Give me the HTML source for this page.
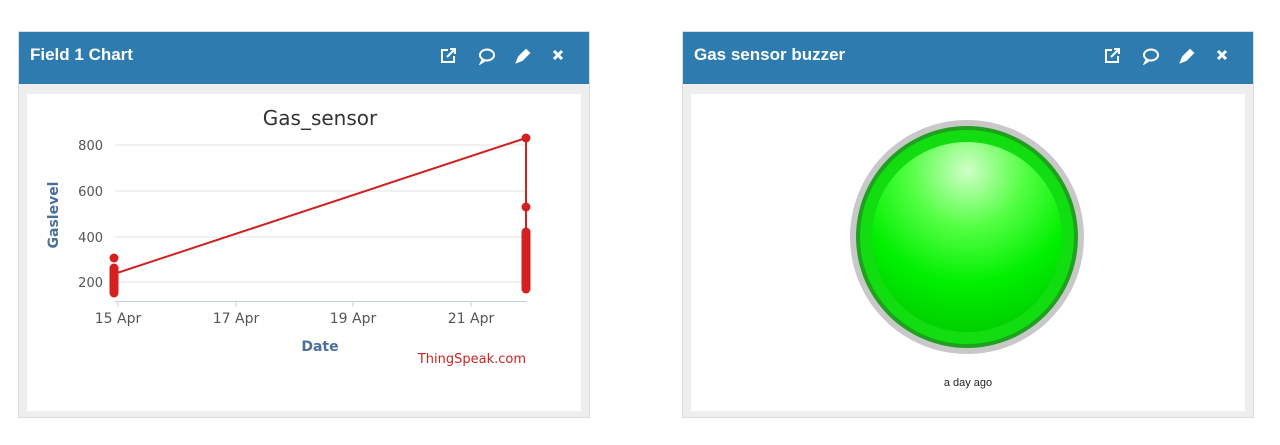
<!DOCTYPE html>
<html><head><style>
body{margin:0;width:1280px;height:445px;background:#fff;font-family:"Liberation Sans",sans-serif;position:relative;overflow:hidden}
.p{position:absolute;top:31px;width:572px;height:387px;background:#eee;border:1px solid #ddd;box-sizing:border-box}
.h{height:52px;background:#2e7bb0;color:#fff;font-weight:bold;font-size:17px;line-height:46px;padding-left:11px;position:relative}
.ic{position:absolute;top:15px}
.b{position:absolute;left:8px;top:62px;width:554px;height:317px;background:#fff}
</style></head><body>
<div class="p" style="left:18px">
<div class="h">Field 1 Chart
<svg class="ic" style="left:420px" width="130" height="18" viewBox="0 0 130 18" fill="none" stroke="#fff" stroke-width="2">
<path d="M9 3H3v12h12V9"/><path d="M8 10l8-8M11 2h5v5"/>
<ellipse cx="48" cy="8" rx="7" ry="5.5"/><path d="M44 12l-2 4 4-2.5"/>
<path d="M78 15l2-5 7-7 3 3-7 7z" fill="#fff"/>
<path d="M115 4l8 8M123 4l-8 8" stroke-width="3"/>
</svg></div>
<div class="b"></div>
</div>
<div class="p" style="left:682px">
<div class="h">Gas sensor buzzer
<svg class="ic" style="left:420px" width="130" height="18" viewBox="0 0 130 18" fill="none" stroke="#fff" stroke-width="2">
<path d="M9 3H3v12h12V9"/><path d="M8 10l8-8M11 2h5v5"/>
<ellipse cx="48" cy="8" rx="7" ry="5.5"/><path d="M44 12l-2 4 4-2.5"/>
<path d="M78 15l2-5 7-7 3 3-7 7z" fill="#fff"/>
<path d="M115 4l8 8M123 4l-8 8" stroke-width="3"/>
</svg></div>
<div class="b"></div>
</div>
<svg style="position:absolute;left:0;top:0" width="1280" height="445">
<defs>
<radialGradient id="g" cx="50%" cy="15%" r="85%"><stop offset="0" stop-color="#d0ffc8"/><stop offset="0.35" stop-color="#55ff44"/><stop offset="0.7" stop-color="#00f000"/><stop offset="1" stop-color="#00d000"/></radialGradient>
</defs>
<text x="320" y="125" font-size="20" fill="#333" text-anchor="middle" font-family="DejaVu Sans,sans-serif">Gas_sensor</text>
<g stroke="#e3e3e3" stroke-width="1"><line x1="115" y1="145" x2="525" y2="145"/><line x1="115" y1="191" x2="525" y2="191"/><line x1="115" y1="237" x2="525" y2="237"/><line x1="115" y1="282" x2="525" y2="282"/></g>
<line x1="115" y1="301.5" x2="527" y2="301.5" stroke="#c0d0e0"/>
<g stroke="#c0d0e0"><line x1="118" y1="301" x2="118" y2="307"/><line x1="236" y1="301" x2="236" y2="307"/><line x1="353" y1="301" x2="353" y2="307"/><line x1="471" y1="301" x2="471" y2="307"/></g>
<g font-size="13" fill="#555" text-anchor="end" font-family="DejaVu Sans,sans-serif"><text x="103" y="150">800</text><text x="103" y="196">600</text><text x="103" y="242">400</text><text x="103" y="287">200</text></g>
<g font-size="14" fill="#555" text-anchor="middle" font-family="DejaVu Sans,sans-serif"><text x="118" y="323">15 Apr</text><text x="236" y="323">17 Apr</text><text x="353" y="323">19 Apr</text><text x="471" y="323">21 Apr</text></g>
<text x="320" y="351" font-size="14" font-weight="bold" fill="#4a6f9a" text-anchor="middle" font-family="DejaVu Sans,sans-serif">Date</text>
<text transform="translate(58,215) rotate(-90)" font-size="14" font-weight="bold" fill="#4a6f9a" text-anchor="middle" font-family="DejaVu Sans,sans-serif">Gaslevel</text>
<text x="526" y="363" font-size="13" fill="#cc2222" text-anchor="end" font-family="DejaVu Sans,sans-serif">ThingSpeak.com</text>
<g stroke="#cc2222" stroke-width="2"><line x1="114" y1="274" x2="526" y2="138"/><line x1="526" y1="138" x2="526" y2="288"/></g>
<g stroke="#d42020" stroke-width="9" stroke-linecap="round"><line x1="114" y1="268" x2="114" y2="293"/><line x1="526" y1="232" x2="526" y2="289"/></g>
<g fill="#d42020">
<circle cx="114" cy="258" r="4.5"/>
<circle cx="526" cy="138" r="4.5"/><circle cx="526" cy="207" r="4.5"/>
</g>
<circle cx="967" cy="237" r="117" fill="#c8c8c8"/>
<circle cx="967" cy="237" r="111" fill="#1fa01f"/>
<circle cx="967" cy="237" r="107" fill="#11dd11"/>
<circle cx="967" cy="237" r="95" fill="url(#g)"/>
<text x="968" y="386" font-size="11" fill="#222" text-anchor="middle">a day ago</text>
</svg>
</body></html>
